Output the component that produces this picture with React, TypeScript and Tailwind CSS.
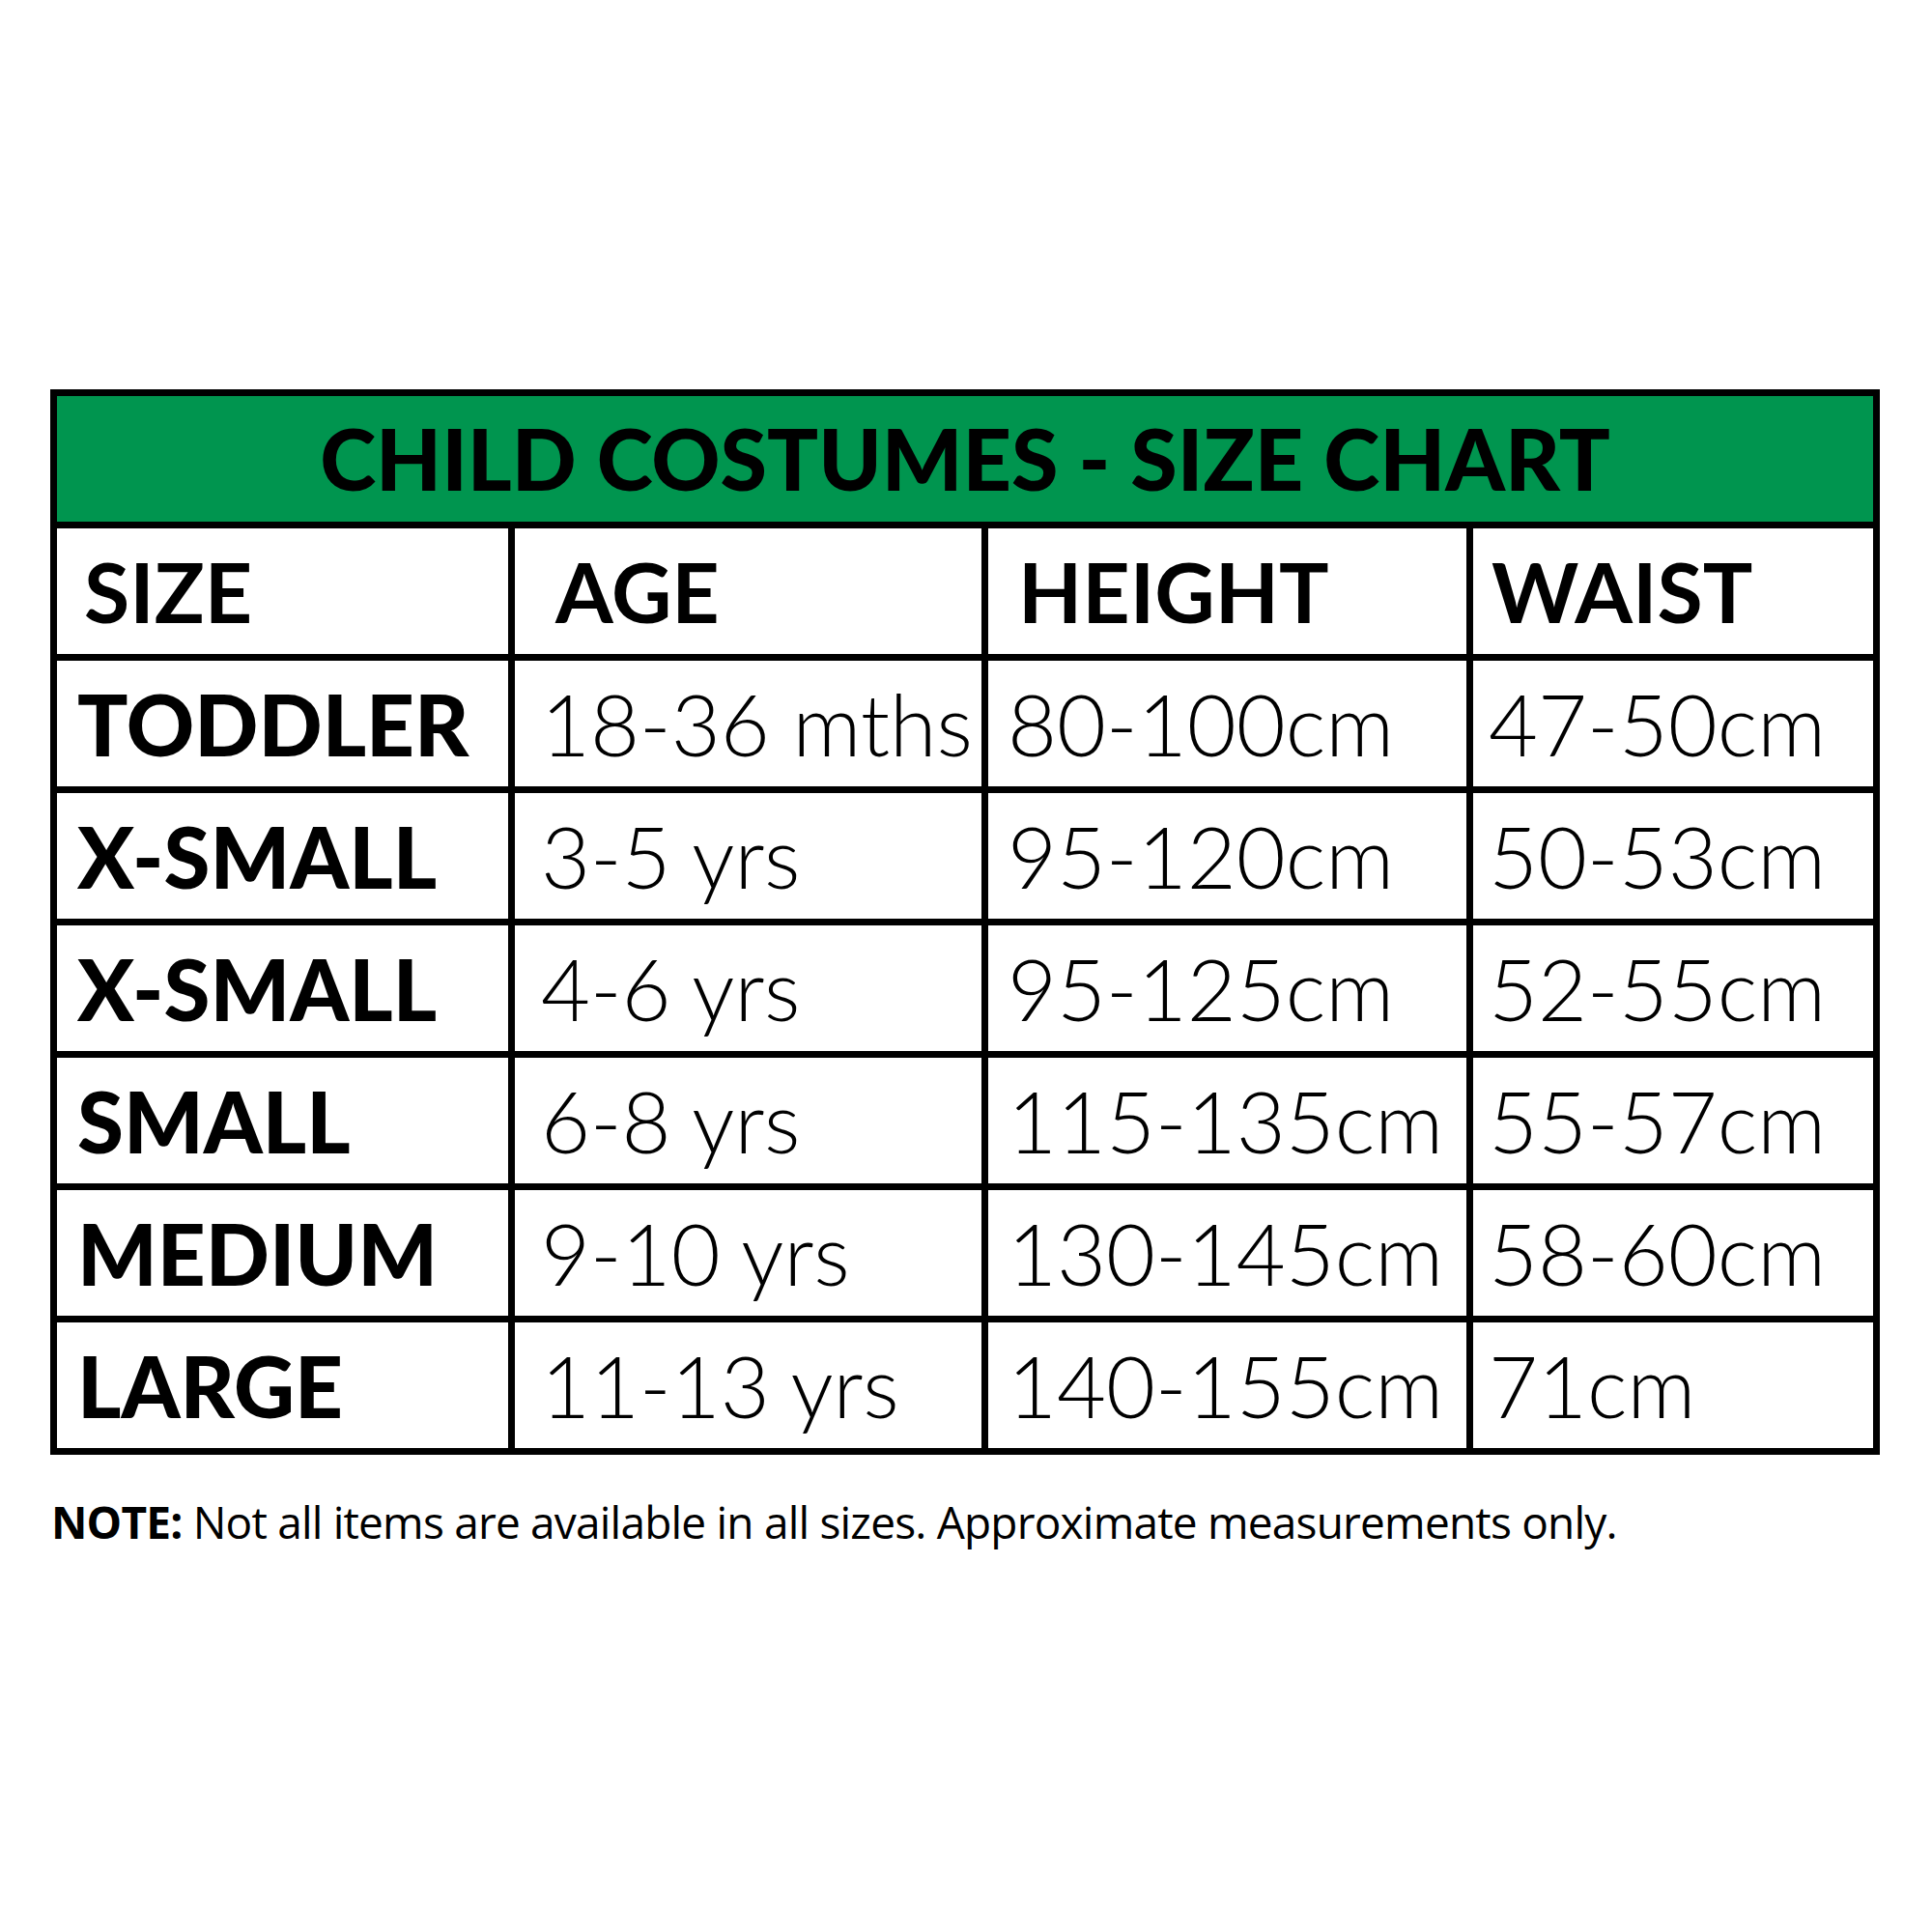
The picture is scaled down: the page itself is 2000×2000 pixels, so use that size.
const HEADERS = [
  { label: "SIZE", pad: "pl-[28px]" },
  { label: "AGE", pad: "pl-[42px]" },
  { label: "HEIGHT", pad: "pl-[31px]" },
  { label: "WAIST", pad: "pl-[19px]" },
];

const ROWS = [
  ["TODDLER", "18-36 mths", "80-100cm", "47-50cm"],
  ["X-SMALL", "3-5 yrs", "95-120cm", "50-53cm"],
  ["X-SMALL", "4-6 yrs", "95-125cm", "52-55cm"],
  ["SMALL", "6-8 yrs", "115-135cm", "55-57cm"],
  ["MEDIUM", "9-10 yrs", "130-145cm", "58-60cm"],
  ["LARGE", "11-13 yrs", "140-155cm", "71cm"],
];

const CELL_PAD = ["pl-[21px]", "pl-[27px]", "pl-[20px]", "pl-[16px]"];

export default function App() {
  return (
    <div className="w-[2000px] h-[2000px] bg-white pt-[403px] pl-[52px] font-['Lato',sans-serif] text-black">
      <div className="w-[1894px] bg-black p-[7px] grid grid-cols-[467px_483px_495px_414px] auto-rows-[130px] gap-[7px]">
        <div className="col-span-4 bg-[#00954f] flex items-center justify-center pb-[2px]">
          <span className="text-[88px] font-black leading-none">CHILD COSTUMES - SIZE CHART</span>
        </div>

        {HEADERS.map((h) => (
          <div key={h.label} className={`bg-white flex items-center ${h.pad}`}>
            <span className="text-[86px] font-bold leading-none">{h.label}</span>
          </div>
        ))}

        {ROWS.map((row, r) =>
          row.map((cell, c) => (
            <div key={`${r}-${c}`} className={`bg-white flex items-center ${CELL_PAD[c]}`}>
              <span
                className={
                  c === 0
                    ? "text-[87px] font-black leading-none"
                    : "text-[88px] font-light leading-none whitespace-nowrap"
                }
              >
                {cell}
              </span>
            </div>
          )),
        )}
      </div>

      <p className="mt-[46px] ml-[1px] text-[46px] leading-none font-['Open_Sans',sans-serif] tracking-[-0.8px]">
        <span className="font-bold">NOTE:</span> Not all items are available in all sizes. Approximate measurements only.
      </p>
    </div>
  );
}
